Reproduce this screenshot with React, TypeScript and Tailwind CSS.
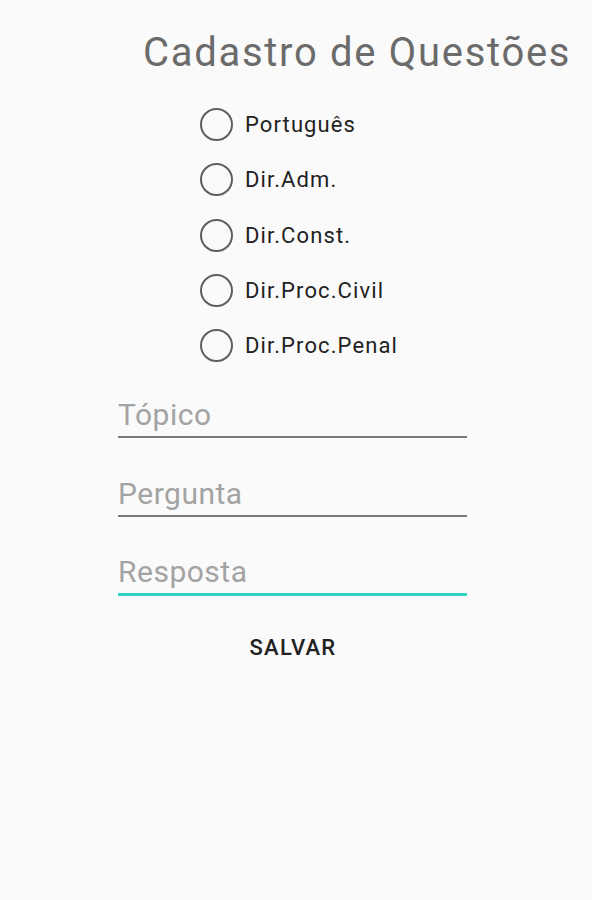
import React, { useState } from "react";

const materias = ["Português", "Dir.Adm.", "Dir.Const.", "Dir.Proc.Civil", "Dir.Proc.Penal"];

const campos = ["Tópico", "Pergunta", "Resposta"];

export default function App() {
  const [materia, setMateria] = useState<string | null>(null);
  const [focado, setFocado] = useState("Resposta");

  return (
    <div className="min-h-[900px] w-[592px] bg-[#fafafa] font-['Roboto',sans-serif]">
      {/* Título */}
      <h1 className="pl-[143px] pt-[28px] text-[40px] leading-[50px] tracking-[1.7px] text-[#6b6b6b] whitespace-nowrap">
        Cadastro de Questões
      </h1>

      {/* Matérias */}
      <div className="mt-[19px] flex flex-col pl-[200px]">
        {materias.map((m) => (
          <label key={m} className="flex h-[55.25px] items-center gap-[12px] cursor-pointer" onClick={() => setMateria(m)}>
            <span className="flex h-[33px] w-[33px] items-center justify-center rounded-full border-[2.5px] border-[#5f5f5f]">
              {materia === m && <span className="h-[16px] w-[16px] rounded-full bg-[#26c6b6]" />}
            </span>
            <span className="text-[22px] tracking-[1.1px] text-[#222]">{m}</span>
          </label>
        ))}
      </div>

      {/* Campos */}
      <div className="ml-[118px] mt-[15px] flex w-[349px] flex-col gap-[29px]">
        {campos.map((c) => (
          <input
            key={c}
            placeholder={c}
            onFocus={() => setFocado(c)}
            className={
              "h-[50px] w-full bg-transparent pt-[4px] text-[30px] tracking-[0.5px] text-[#333] outline-none placeholder:text-[#a3a3a3] " +
              (focado === c ? "border-b-[3px] border-[#2dd4c4]" : "border-b-2 border-[#7a7a7a]")
            }
          />
        ))}
      </div>

      {/* Botão */}
      <div className="mt-[27px] flex justify-center pr-[6px]">
        <button className="px-4 py-2 text-[22px] font-medium tracking-[1.2px] text-[#222]">SALVAR</button>
      </div>
    </div>
  );
}
